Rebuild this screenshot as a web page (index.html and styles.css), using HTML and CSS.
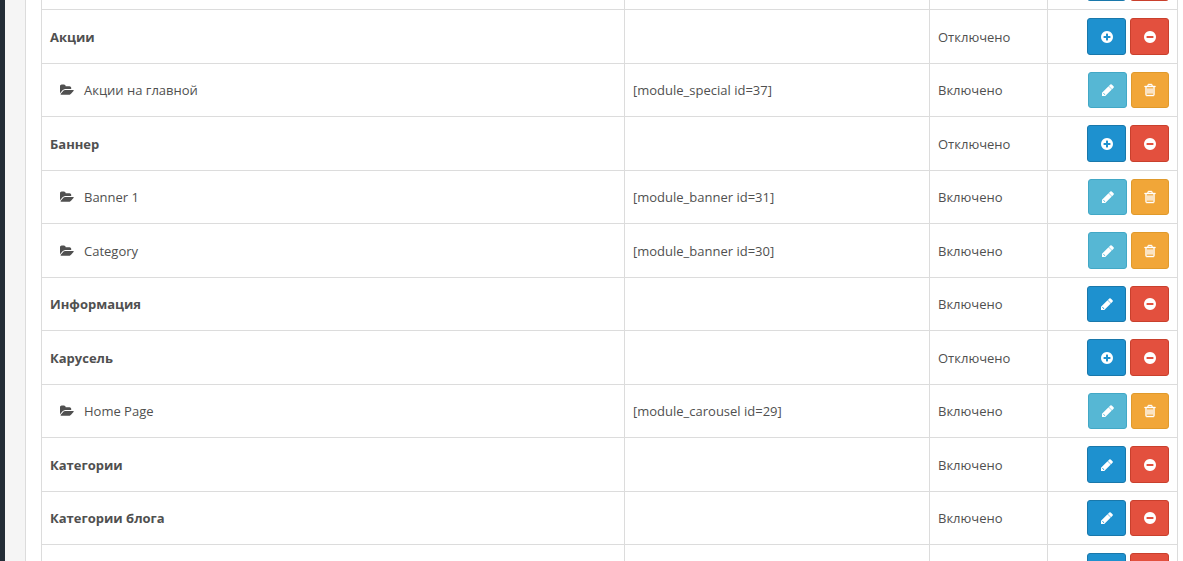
FILE: index.html
```
<!DOCTYPE html>
<html lang="ru">
<head>
<meta charset="utf-8">
<title>Модули</title>
<link rel="stylesheet" href="styles.css">
</head>
<body>
<svg class="sprite" aria-hidden="true">
  <symbol id="plus" viewBox="0 0 1792 1792"><path d="M1344 960v-128q0-26-19-45t-45-19h-256v-256q0-26-19-45t-45-19h-128q-26 0-45 19t-19 45v256h-256q-26 0-45 19t-19 45v128q0 26 19 45t45 19h256v256q0 26 19 45t45 19h128q26 0 45-19t19-45v-256h256q26 0 45-19t19-45zm320-64q0 209-103 385.5t-279.5 279.5-385.5 103-385.5-103-279.5-279.5-103-385.5 103-385.5 279.5-279.5 385.5-103 385.5 103 279.5 279.5 103 385.5z"/></symbol>
  <symbol id="minus" viewBox="0 0 1792 1792"><path d="M1344 960v-128q0-26-19-45t-45-19h-768q-26 0-45 19t-19 45v128q0 26 19 45t45 19h768q26 0 45-19t19-45zm320-64q0 209-103 385.5t-279.5 279.5-385.5 103-385.5-103-279.5-279.5-103-385.5 103-385.5 279.5-279.5 385.5-103 385.5 103 279.5 279.5 103 385.5z"/></symbol>
  <symbol id="pencil" viewBox="0 0 1792 1792"><path d="M491 1536l60-60-204-204-60 60v76h128v128h76zm469-1120l416 416-832 832h-416v-416zm683 96q0 53-37 90l-186 186-416-416 186-185q36-38 90-38 53 0 91 38l235 234q37 39 37 91z"/></symbol>
  <symbol id="trash" viewBox="0 0 1792 1792"><path stroke="currentColor" stroke-width="50" d="M704 736v576q0 14-9 23t-23 9h-64q-14 0-23-9t-9-23v-576q0-14 9-23t23-9h64q14 0 23 9t9 23zm256 0v576q0 14-9 23t-23 9h-64q-14 0-23-9t-9-23v-576q0-14 9-23t23-9h64q14 0 23 9t9 23zm256 0v576q0 14-9 23t-23 9h-64q-14 0-23-9t-9-23v-576q0-14 9-23t23-9h64q14 0 23 9t9 23zm128 724v-948h-896v948q0 22 7 40.5t14.5 27 10.5 8.5h832q3 0 10.5-8.5t14.5-27 7-40.5zm-672-1076h448l-48-117q-7-9-17-11h-317q-10 2-17 11zm928 32v64q0 14-9 23t-23 9h-96v948q0 83-47 143.5t-113 60.5h-832q-66 0-113-58.5t-47-141.5v-952h-96q-14 0-23-9t-9-23v-64q0-14 9-23t23-9h309l70-167q15-37 54-63t79-26h320q40 0 79 26t54 63l70 167h309q14 0 23 9t9 23z"/></symbol>
  <symbol id="folder" viewBox="0 0 1920 1792"><path d="M1879 952q0 31-31 66l-336 396q-43 51-120.5 86.5t-143.5 35.5h-1088q-34 0-60.5-13t-26.5-43q0-31 31-66l336-396q43-51 120.5-86.5t143.5-35.5h1088q34 0 60.5 13t26.5 43zm-343-344v160h-832q-94 0-197 47.5t-164 119.5l-337 396-5 6q0-4-.5-12.5t-.5-12.5v-960q0-92 66-158t158-66h320q92 0 158 66t66 158v32h544q92 0 158 66t66 158z"/></symbol>
</svg>
<div class="sidebar"></div>
<main class="content">
  <div class="panel">
    <table class="modules">
      <colgroup><col><col class="col-code"><col class="col-status"><col class="col-actions"></colgroup>
      <tbody>
        <tr><td></td><td></td><td></td><td><div class="actions"><button class="btn primary" type="button" aria-label="Установить"><svg><use href="#plus"/></svg></button><button class="btn danger" type="button" aria-label="Отключить"><svg><use href="#minus"/></svg></button></div></td></tr>
        <tr><td><b>Акции</b></td><td></td><td>Отключено</td><td><div class="actions"><button class="btn primary" type="button" aria-label="Добавить"><svg><use href="#plus"/></svg></button><button class="btn danger" type="button" aria-label="Отключить"><svg><use href="#minus"/></svg></button></div></td></tr>
        <tr><td><div class="child"><svg><use href="#folder"/></svg>Акции на главной</div></td><td>[module_special id=37]</td><td>Включено</td><td><div class="actions"><button class="btn info" type="button" aria-label="Редактировать"><svg><use href="#pencil"/></svg></button><button class="btn warning" type="button" aria-label="Удалить"><svg><use href="#trash"/></svg></button></div></td></tr>
        <tr><td><b>Баннер</b></td><td></td><td>Отключено</td><td><div class="actions"><button class="btn primary" type="button" aria-label="Добавить"><svg><use href="#plus"/></svg></button><button class="btn danger" type="button" aria-label="Отключить"><svg><use href="#minus"/></svg></button></div></td></tr>
        <tr><td><div class="child"><svg><use href="#folder"/></svg>Banner 1</div></td><td>[module_banner id=31]</td><td>Включено</td><td><div class="actions"><button class="btn info" type="button" aria-label="Редактировать"><svg><use href="#pencil"/></svg></button><button class="btn warning" type="button" aria-label="Удалить"><svg><use href="#trash"/></svg></button></div></td></tr>
        <tr><td><div class="child"><svg><use href="#folder"/></svg>Category</div></td><td>[module_banner id=30]</td><td>Включено</td><td><div class="actions"><button class="btn info" type="button" aria-label="Редактировать"><svg><use href="#pencil"/></svg></button><button class="btn warning" type="button" aria-label="Удалить"><svg><use href="#trash"/></svg></button></div></td></tr>
        <tr><td><b>Информация</b></td><td></td><td>Включено</td><td><div class="actions"><button class="btn primary" type="button" aria-label="Редактировать"><svg><use href="#pencil"/></svg></button><button class="btn danger" type="button" aria-label="Отключить"><svg><use href="#minus"/></svg></button></div></td></tr>
        <tr><td><b>Карусель</b></td><td></td><td>Отключено</td><td><div class="actions"><button class="btn primary" type="button" aria-label="Добавить"><svg><use href="#plus"/></svg></button><button class="btn danger" type="button" aria-label="Отключить"><svg><use href="#minus"/></svg></button></div></td></tr>
        <tr><td><div class="child"><svg><use href="#folder"/></svg>Home Page</div></td><td>[module_carousel id=29]</td><td>Включено</td><td><div class="actions"><button class="btn info" type="button" aria-label="Редактировать"><svg><use href="#pencil"/></svg></button><button class="btn warning" type="button" aria-label="Удалить"><svg><use href="#trash"/></svg></button></div></td></tr>
        <tr><td><b>Категории</b></td><td></td><td>Включено</td><td><div class="actions"><button class="btn primary" type="button" aria-label="Редактировать"><svg><use href="#pencil"/></svg></button><button class="btn danger" type="button" aria-label="Отключить"><svg><use href="#minus"/></svg></button></div></td></tr>
        <tr><td><b>Категории блога</b></td><td></td><td>Включено</td><td><div class="actions"><button class="btn primary" type="button" aria-label="Редактировать"><svg><use href="#pencil"/></svg></button><button class="btn danger" type="button" aria-label="Отключить"><svg><use href="#minus"/></svg></button></div></td></tr>
        <tr><td></td><td></td><td></td><td><div class="actions"><button class="btn primary" type="button" aria-label="Редактировать"><svg><use href="#pencil"/></svg></button><button class="btn danger" type="button" aria-label="Отключить"><svg><use href="#minus"/></svg></button></div></td></tr>
      </tbody>
    </table>
  </div>
</main>
</body>
</html>
```
FILE: styles.css
```
* {
  box-sizing: border-box;
}

body {
  display: flex;
  height: 100vh;
  margin: 0;
  overflow: hidden;
  background: #f5f5f5;
  color: #505050;
  font: 13px/20px "Open Sans", "Noto Sans", sans-serif;
}

.sprite {
  display: none;
}

.sidebar {
  flex: none;
  width: 5px;
  background: #242d37;
}

.content {
  flex: 1;
  padding-left: 20px;
}

.panel {
  padding: 0 5px 0 15px;
  border-left: 1px solid #dcdcdc;
  background: #fff;
}

/* The list is scrolled part of the way through its first row */
.modules {
  width: 100%;
  margin-top: -44px;
  border-collapse: collapse;
  table-layout: fixed;
}

.col-code {
  width: 305px;
}

.col-status {
  width: 118px;
}

.col-actions {
  width: 130px;
}

.modules td {
  padding: 8px;
  border: 1px solid #dcdcdc;
  vertical-align: middle;
}

.child {
  display: flex;
  align-items: center;
  gap: 10px;
  padding-left: 10px;
}

.child svg {
  width: 14px;
  height: 14px;
  fill: currentColor;
}

.actions {
  display: flex;
  justify-content: flex-end;
  gap: 4px;
}

.btn {
  display: flex;
  align-items: center;
  justify-content: center;
  width: 39px;
  height: 36px;
  padding: 0;
  border: 1px solid;
  border-radius: 3px;
  color: #fff;
  cursor: pointer;
}

tr:nth-child(even) .btn {
  height: 37px;
}

.btn svg {
  width: 14px;
  height: 14px;
  fill: currentColor;
}

.primary {
  border-color: #1978ab;
  background: #1e91cf;
}

.danger {
  border-color: #c9402d;
  background: #e3503e;
}

.info {
  border-color: #42a8c6;
  background: #56b7d4;
}

.warning {
  width: 38px;
  border-color: #e09a2c;
  background: #f1a638;
}
```
